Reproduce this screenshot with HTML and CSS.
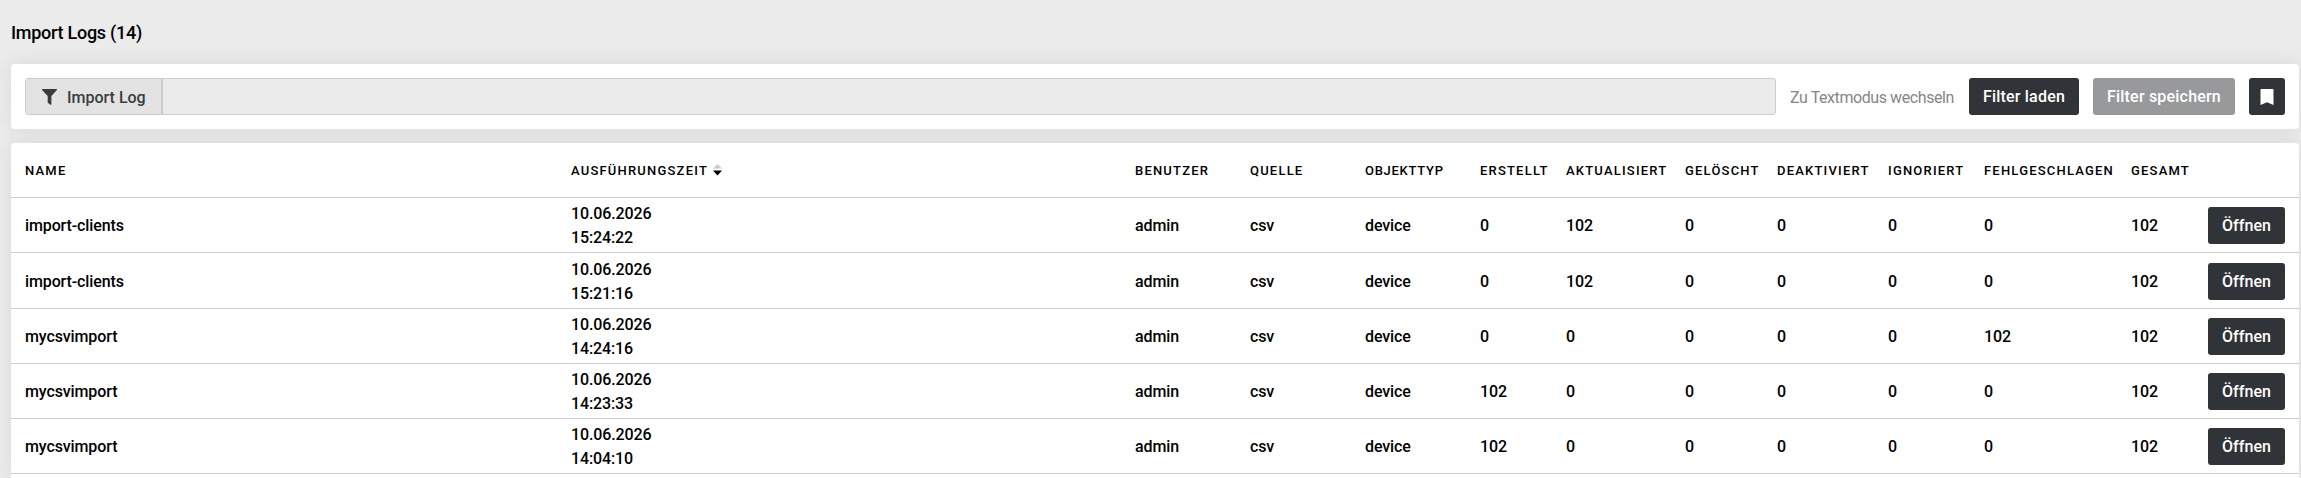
FILE: index.html
```html
<!DOCTYPE html>
<html lang="de">

<head>
    <meta charset="UTF-8">
    <title>Import Logs</title>
    <link rel="stylesheet" href="styles.css">
</head>

<body>
    <h1 class="title">Import Logs (14)</h1>

    <div class="card filterbar">
        <div class="search">
            <div class="search-type">
                <svg class="icon-filter" width="15" height="16" viewBox="0 0 15 16">
                    <path d="M.6 0h13.8c.6 0 .8.7.5 1.1L9.4 7v8.3c0 .6-.6.8-1 .5l-2.300-1.700c-.3-.2-.4-.4-.4-.7V7L.1 1.100C-.2.7 0 0 .6 0z" />
                </svg>
                <span>Import Log</span>
            </div>
        </div>
        <a class="textmode">Zu Textmodus wechseln</a>
        <button class="btn btn-load">Filter laden</button>
        <button class="btn btn-save" disabled>Filter speichern</button>
        <button class="btn btn-bookmark">
            <svg width="14" height="16" viewBox="0 0 14 16">
                <path d="M1.500 0h11c.6 0 1 .4 1 1v15L7 13.300.5 16V1c0-.6.4-1 1-1z" />
            </svg>
        </button>
    </div>

    <div class="card list">
        <table>
            <colgroup>
                <col class="c-name">
                <col class="c-time">
                <col class="c-text">
                <col class="c-text">
                <col class="c-text">
                <col class="c-created">
                <col class="c-updated">
                <col class="c-deleted">
                <col class="c-disabled">
                <col class="c-ignored">
                <col class="c-failed">
                <col class="c-total">
                <col class="c-action">
            </colgroup>
            <thead>
                <tr>
                    <th>Name</th>
                    <th>Ausführungszeit<svg class="sort" width="9" height="12" viewBox="0 0 9 12">
                            <path class="sort-up" d="M0 4.500 4.500 0 9 4.500z" />
                            <path d="M0 6.500h9L4.500 11.500z" />
                        </svg></th>
                    <th>Benutzer</th>
                    <th>Quelle</th>
                    <th class="tight">Objekttyp</th>
                    <th>Erstellt</th>
                    <th>Aktualisiert</th>
                    <th>Gelöscht</th>
                    <th>Deaktiviert</th>
                    <th>Ignoriert</th>
                    <th>Fehlgeschlagen</th>
                    <th>Gesamt</th>
                    <th></th>
                </tr>
            </thead>
            <tbody>
                <tr>
                    <td>import-clients</td>
                    <td>10.06.2026<br>15:24:22</td>
                    <td>admin</td>
                    <td>csv</td>
                    <td>device</td>
                    <td>0</td>
                    <td>102</td>
                    <td>0</td>
                    <td>0</td>
                    <td>0</td>
                    <td>0</td>
                    <td>102</td>
                    <td class="action"><button class="btn btn-open">Öffnen</button></td>
                </tr>
                <tr class="tall">
                    <td>import-clients</td>
                    <td>10.06.2026<br>15:21:16</td>
                    <td>admin</td>
                    <td>csv</td>
                    <td>device</td>
                    <td>0</td>
                    <td>102</td>
                    <td>0</td>
                    <td>0</td>
                    <td>0</td>
                    <td>0</td>
                    <td>102</td>
                    <td class="action"><button class="btn btn-open">Öffnen</button></td>
                </tr>
                <tr>
                    <td>mycsvimport</td>
                    <td>10.06.2026<br>14:24:16</td>
                    <td>admin</td>
                    <td>csv</td>
                    <td>device</td>
                    <td>0</td>
                    <td>0</td>
                    <td>0</td>
                    <td>0</td>
                    <td>0</td>
                    <td>102</td>
                    <td>102</td>
                    <td class="action"><button class="btn btn-open">Öffnen</button></td>
                </tr>
                <tr>
                    <td>mycsvimport</td>
                    <td>10.06.2026<br>14:23:33</td>
                    <td>admin</td>
                    <td>csv</td>
                    <td>device</td>
                    <td>102</td>
                    <td>0</td>
                    <td>0</td>
                    <td>0</td>
                    <td>0</td>
                    <td>0</td>
                    <td>102</td>
                    <td class="action"><button class="btn btn-open">Öffnen</button></td>
                </tr>
                <tr>
                    <td>mycsvimport</td>
                    <td>10.06.2026<br>14:04:10</td>
                    <td>admin</td>
                    <td>csv</td>
                    <td>device</td>
                    <td>102</td>
                    <td>0</td>
                    <td>0</td>
                    <td>0</td>
                    <td>0</td>
                    <td>0</td>
                    <td>102</td>
                    <td class="action"><button class="btn btn-open">Öffnen</button></td>
                </tr>
            </tbody>
        </table>
    </div>
</body>

</html>
```
FILE: styles.css
```css
* {
    box-sizing: border-box;
}

body {
    display: flex;
    flex-direction: column;
    margin: 0;
    padding: 0 2px 0 11px;
    height: 100vh;
    background: #ebebeb;
    color: #000;
    font: 500 16px/24px Roboto, "Liberation Sans", sans-serif;
}

.title {
    margin: 0;
    height: 64px;
    padding-top: 1px;
    font-size: 18px;
    font-weight: 500;
    line-height: 64px;
    letter-spacing: -0.27px;
}

.card {
    background: #fff;
    border-radius: 4px;
    box-shadow: 0 0 20px rgba(0, 0, 0, 0.08);
}

/* filter bar */
.filterbar {
    display: flex;
    flex: none;
    align-items: center;
    height: 65px;
    padding: 0 14px;
    margin-bottom: 14px;
}

.search {
    display: flex;
    flex: 1;
    height: 37px;
    background: #ebebeb;
    border: 1px solid #ccc;
    border-radius: 3px;
}

.search-type {
    display: flex;
    align-items: center;
    width: 137px;
    padding-left: 16px;
    background: #e3e3e3;
    border-right: 2px solid #ccc;
    color: #3c3c3c;
    letter-spacing: 0;
}

.search-type span {
    padding-top: 2px;
}

.icon-filter {
    margin-right: 10px;
    fill: #3c3c3c;
}

.textmode {
    width: 165px;
    margin: 0 14px;
    padding-top: 2px;
    color: #868686;
    font-weight: 400;
    letter-spacing: -0.42px;
    white-space: nowrap;
}

.btn {
    display: block;
    height: 37px;
    padding: 1px 0 0;
    border: 0;
    border-radius: 3px;
    background: #303338;
    color: #fff;
    font: inherit;
    letter-spacing: 0.2px;
    white-space: nowrap;
}

.btn svg {
    display: block;
    margin: 0 auto;
    fill: #fff;
}

.btn-load {
    width: 110px;
}

.btn-save {
    width: 142px;
    margin: 0 14px;
    background: #98999b;
}

.btn-bookmark {
    width: 36px;
    padding: 0;
}

.btn-open {
    width: 77px;
    letter-spacing: 0.06px;
}

/* table */
.list {
    flex: 1;
    border-radius: 4px 4px 0 0;
}

table {
    width: 100%;
    table-layout: fixed;
    border-collapse: separate;
    border-spacing: 0;
}

th,
td {
    height: 55px;
    padding: 2px 0 0 14px;
    border-bottom: 1px solid #ccc;
    text-align: left;
    vertical-align: middle;
    white-space: nowrap;
}

th {
    font-size: 13px;
    font-weight: 500;
    letter-spacing: 1.2px;
    text-transform: uppercase;
}

th.tight {
    letter-spacing: 0.72px;
}

td {
    letter-spacing: -0.12px;
}

td.action {
    padding-top: 1px;
}

.tall td {
    height: 56px;
}

.sort {
    margin-left: 5px;
    vertical-align: -1px;
}

.sort-up {
    fill: #ccc;
}

.c-name {
    width: 546px;
}

.c-time {
    width: 564px;
}

.c-text {
    width: 115px;
}

.c-created {
    width: 86px;
}

.c-updated {
    width: 119px;
}

.c-deleted {
    width: 92px;
}

.c-disabled {
    width: 111px;
}

.c-ignored {
    width: 96px;
}

.c-failed {
    width: 147px;
}

.c-total {
    width: 77px;
}

.c-action {
    width: 105px;
}
```
